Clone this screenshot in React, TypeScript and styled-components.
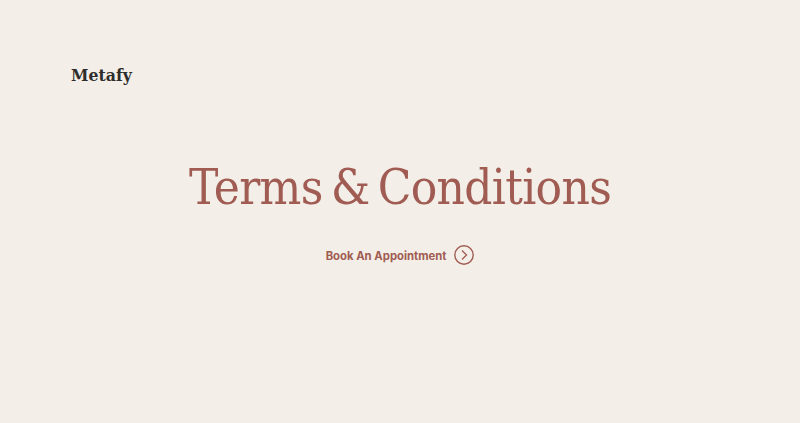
import React from "react";
import styled, { createGlobalStyle } from "styled-components";

const GlobalStyle = createGlobalStyle`
  html, body {
    margin: 0;
    padding: 0;
    background-color: #f3eee8;
  }
`;

const Page = styled.div`
  height: 423px;
  overflow: hidden;
  padding: 0 71px;
  background-color: #f3eee8;
`;

const Header = styled.header`
  display: flex;
  align-items: center;
  height: 150px;
`;

const Logo = styled.a`
  font-family: "DejaVu Serif", serif;
  font-stretch: condensed;
  font-size: 17.5px;
  font-weight: 700;
  color: #2f2d2b;
`;

const Hero = styled.section`
  display: flex;
  flex-direction: column;
  align-items: center;
  padding-top: 2px;
`;

const Title = styled.h1`
  margin: 0;
  font-family: "DejaVu Serif", serif;
  font-stretch: condensed;
  font-size: 49px;
  line-height: 72px;
  font-weight: 400;
  letter-spacing: -0.7px;
  word-spacing: -5px;
  color: #a05c52;
  white-space: nowrap;
`;

const Cta = styled.a`
  display: flex;
  align-items: center;
  gap: 8px;
  margin-top: 21px;
  font-family: Inter, sans-serif;
  font-size: 11.3px;
  font-weight: 700;
  color: #a05c52;
`;

const CtaLabel = styled.span`
  padding-top: 1px;
`;

const ArrowCircle = styled.svg`
  display: block;
  width: 20px;
  height: 20px;
`;

export default function App() {
  return (
    <Page>
      <GlobalStyle />
      <Header>
        <Logo>Metafy</Logo>
      </Header>
      <Hero>
        <Title>Terms &amp; Conditions</Title>
        <Cta>
          <CtaLabel>Book An Appointment</CtaLabel>
          <ArrowCircle viewBox="0 0 20 20" fill="none" stroke="#a05c52">
            <circle cx="10" cy="10" r="9.2" strokeWidth="1.4" />
            <path d="M8 5.5l4.5 4.5-4.5 4.5" strokeWidth="1.3" />
          </ArrowCircle>
        </Cta>
      </Hero>
    </Page>
  );
}
